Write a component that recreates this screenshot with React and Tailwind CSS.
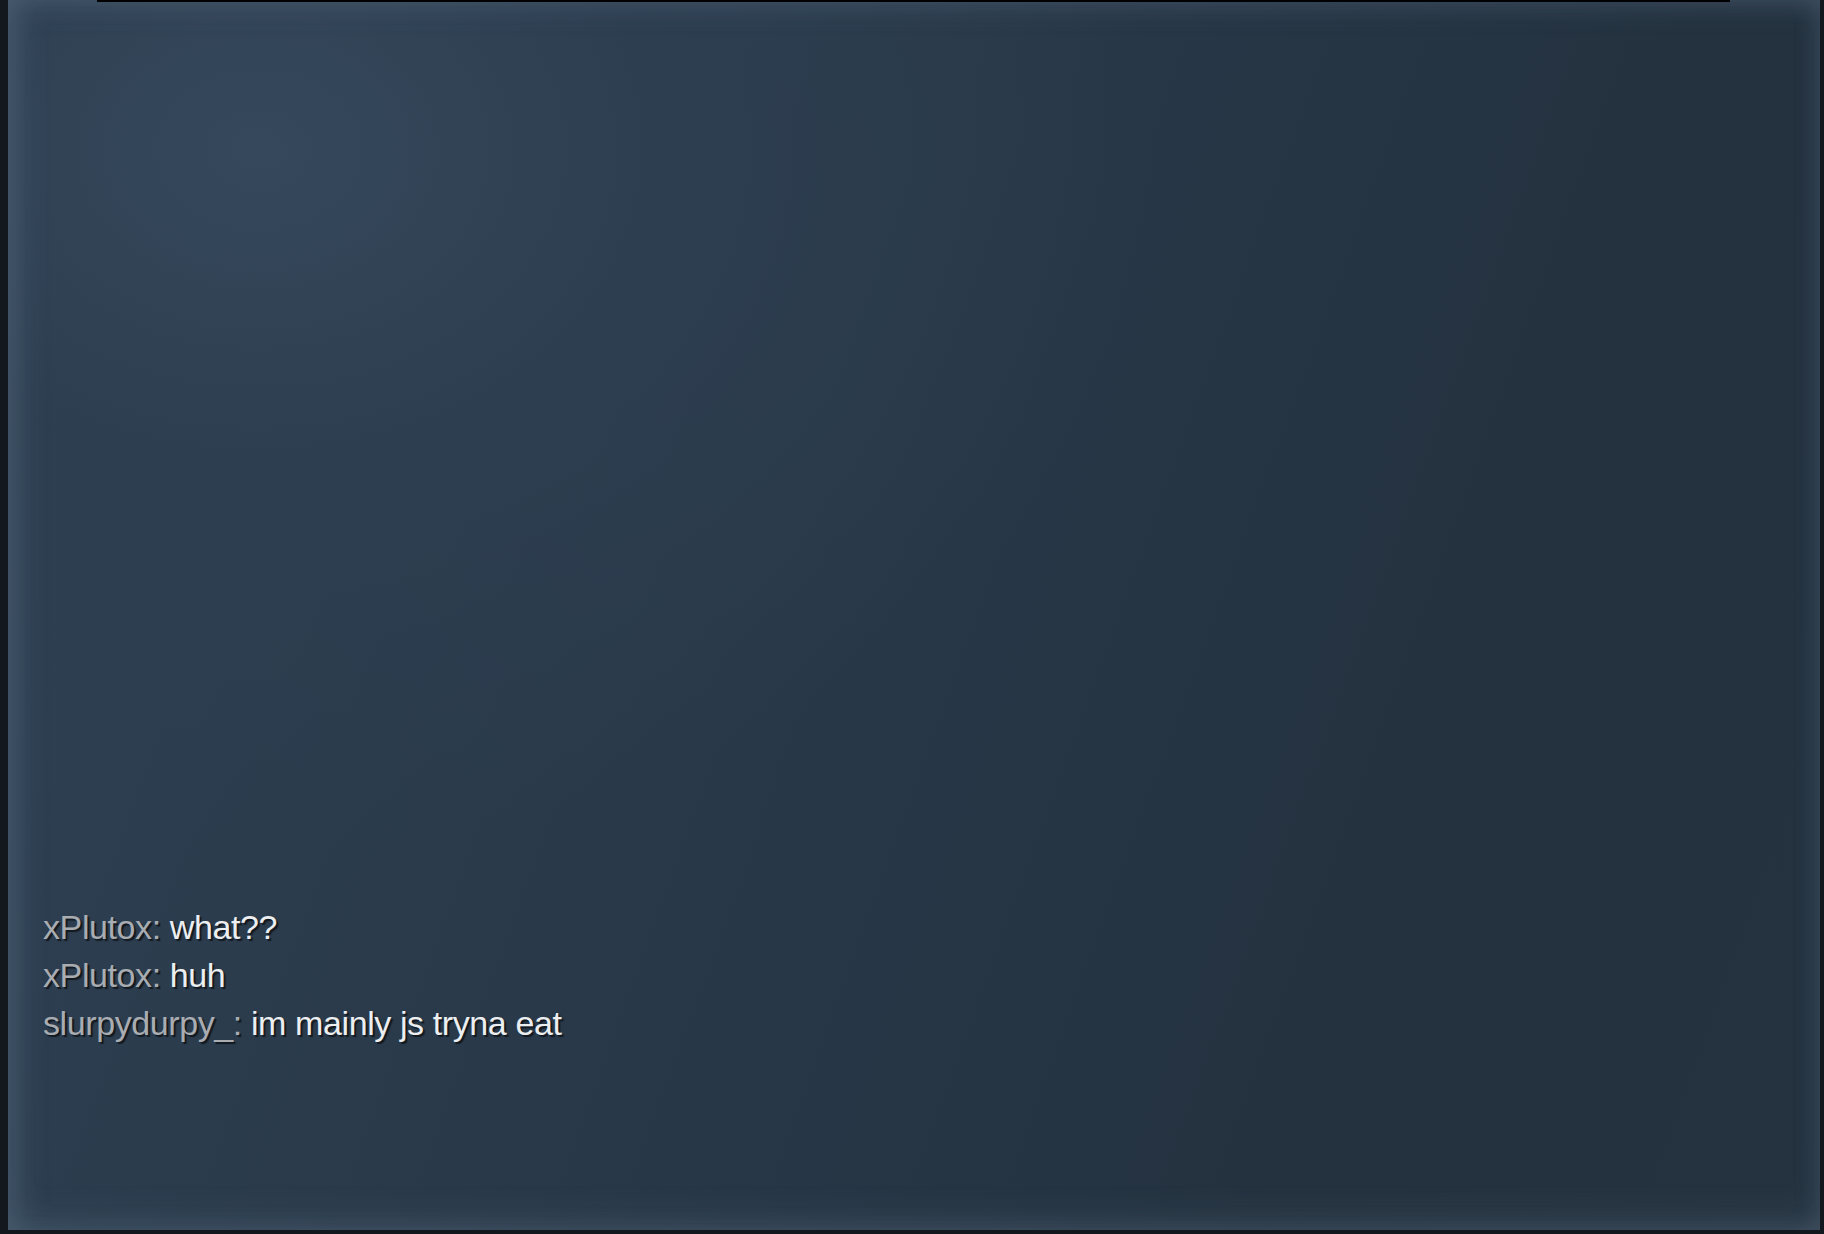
const messages = [
  { user: "xPlutox", text: "what??" },
  { user: "xPlutox", text: "huh" },
  { user: "slurpydurpy_", text: "im mainly js tryna eat" },
];

function ChatLine({ user, text }) {
  return (
    <p className="h-[48px] leading-[48px] whitespace-nowrap">
      <span className="text-[#a9adb2]">{user}: </span>
      <span className="text-[#eceef0]">{text}</span>
    </p>
  );
}

export default function App() {
  return (
    <div className="flex h-[1234px] w-[1824px] bg-[#12181d] pb-[4px] pl-[8px] pr-[4px]">
      <main className="relative flex flex-1 flex-col overflow-hidden bg-[radial-gradient(ellipse_900px_700px_at_250px_150px,_#36485b_0%,_#2d3e50_45%,_transparent_100%),linear-gradient(110deg,_#2f4154_0%,_#283848_45%,_#243240_75%,_#253341_100%)] shadow-[inset_16px_0_26px_rgba(120,140,160,0.2),inset_0_-18px_30px_rgba(120,140,160,0.12),inset_0_14px_24px_rgba(120,140,160,0.10),inset_-10px_0_20px_rgba(120,140,160,0.08)]">
        <div className="ml-[89px] h-[2px] w-[1633px] bg-black" />
        <section className="mt-[901px] pl-[35px] font-['Liberation_Sans',sans-serif] text-[34px] tracking-[-0.4px] [text-shadow:2px_2px_1px_rgba(0,0,0,0.6)]">
          {messages.map((m, i) => (
            <ChatLine key={i} user={m.user} text={m.text} />
          ))}
        </section>
      </main>
    </div>
  );
}
